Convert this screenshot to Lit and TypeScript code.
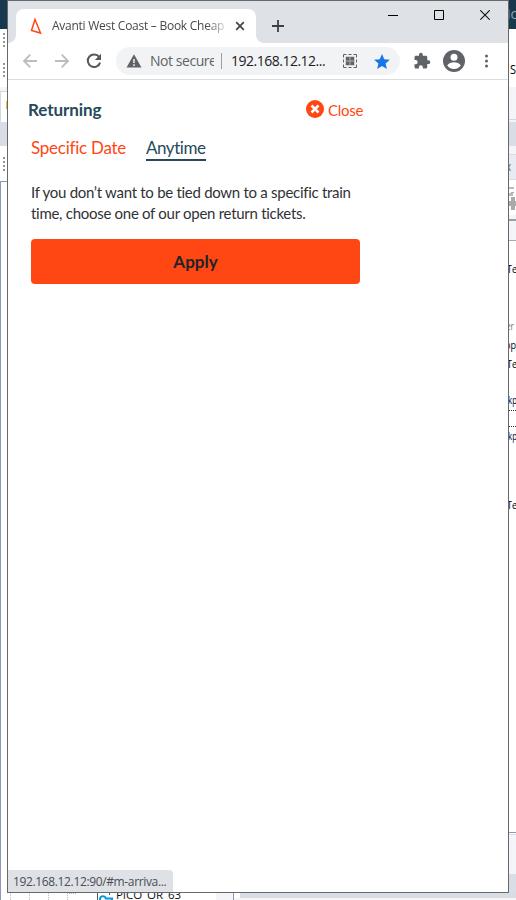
import { LitElement, html, css, svg } from "lit";
import { customElement } from "lit/decorators.js";

@customElement("browser-chrome")
class BrowserChrome extends LitElement {
  static styles = css`
    :host { display: block; font-family: "Open Sans", "Noto Sans", sans-serif; }
    svg { display: block; flex: none; }
    .strip { height: 42px; background: #dee1e6; display: flex; align-items: flex-start; }
    .tab { width: 240px; height: 34px; margin: 8px 0 0 8px; background: #fff; border-radius: 8px 8px 0 0; display: flex; align-items: center; position: relative; }
    .tab::before, .tab::after { content: ""; position: absolute; bottom: 0; width: 8px; height: 8px; }
    .tab::before { left: -8px; background: radial-gradient(circle at 0 0, #dee1e6 7.6px, #fff 8.2px); }
    .tab::after { right: -8px; background: radial-gradient(circle at 100% 0, #dee1e6 7.6px, #fff 8.2px); }
    .fav { margin-left: 14px; }
    .title { margin-left: 10px; width: 172px; font-size: 12px; line-height: 18px; letter-spacing: -0.26px; color: #45484c; white-space: nowrap; overflow: hidden; mask-image: linear-gradient(to right, #000 154px, transparent 178px); }
    .x { margin-left: 11px; }
    .plus { margin: 19px 0 0 16px; }
    .wins { display: flex; margin: 9px 18px 0 auto; gap: 35px; }
    .bar { height: 36px; background: #fff; border-bottom: 1px solid #dadce0; display: flex; align-items: center; }
    .back { margin-left: 14px; }
    .fwd { margin-left: 16px; }
    .reload { margin-left: 16px; }
    .omni { margin-left: 14px; width: 284px; height: 28px; border-radius: 14px; background: #f1f3f4; display: flex; align-items: center; font-size: 14px; line-height: 20px; white-space: nowrap; }
    .warn { margin-left: 10px; }
    .sec { margin-left: 8px; width: 64px; overflow: hidden; color: #5f6368; letter-spacing: -0.45px; }
    .sep { width: 1px; height: 16px; background: #9aa0a6; margin-left: 7px; }
    .url { margin-left: 9px; width: 96px; color: #202124; letter-spacing: -0.5px; }
    .qr { margin-left: 16px; }
    .star { margin-left: 17px; }
    .puzzle { margin-left: 13px; }
    .user { margin-left: 12px; }
    .dots { margin-left: 19px; }
  `;
  render() {
    return html`
      <div class="strip">
        <div class="tab">
          <svg class="fav" width="12" height="18" viewBox="0 0 12 18"><path d="M5 2.5 1.5 13.5 10.5 16Z" fill="none" stroke="#ff4713" stroke-width="1.5"/></svg>
          <div class="title">Avanti West Coast – Book Cheap</div>
          <svg class="x" width="10" height="10" viewBox="0 0 10 10"><path d="M1.2 1.2 8.8 8.8M8.8 1.2 1.2 8.8" stroke="#45494d" stroke-width="1.8"/></svg>
        </div>
        <svg class="plus" width="12" height="12" viewBox="0 0 12 12"><path d="M6 0V12M0 6H12" stroke="#3c4043" stroke-width="1.8"/></svg>
        <div class="wins">
          <svg width="11" height="10"><path d="M0 5.5H10" stroke="#000"/></svg>
          <svg width="11" height="10"><path d="M.5 .5H9.5V9.5H.5Z" fill="none" stroke="#000"/></svg>
          <svg width="10" height="10"><path d="M.3 .3 9.7 9.7M9.7 .3 .3 9.7" stroke="#111" stroke-width="1.1"/></svg>
        </div>
      </div>
      <div class="bar">
        <svg class="back" width="16" height="16" viewBox="0 0 16 16"><path d="M15 8H2.5M8.3 1.7 2 8 8.3 14.3" fill="none" stroke="#babcbe" stroke-width="1.8"/></svg>
        <svg class="fwd" width="16" height="16" viewBox="0 0 16 16"><path d="M1 8H13.5M7.7 1.7 14 8 7.7 14.3" fill="none" stroke="#babcbe" stroke-width="1.8"/></svg>
        <svg class="reload" width="16" height="16" viewBox="0 0 16 16"><path d="M13.2 4A6.3 6.3 0 1 0 14.1 9.6" fill="none" stroke="#55595e" stroke-width="2"/><path d="M15 .8V7H8.8Z" fill="#55595e"/></svg>
        <div class="omni">
          <svg class="warn" width="16" height="14" viewBox="0 0 16 14"><path d="M8 .3 15.5 13.5H.5Z" fill="#5f6368"/><path d="M8 5V9M8 10.3V12" stroke="#f1f3f4" stroke-width="1.5"/></svg>
          <div class="sec">Not secure</div><div class="sep"></div><div class="url">192.168.12.12...</div>
          <svg class="qr" width="14" height="14" viewBox="0 0 14 14"><path d="M.5 3.5V.5H3.5M5.5 .5H8.5M10.5 .5H13.5V3.5M.5 5.5V8.5M13.5 5.5V8.5M.5 10.5V13.5H3.5M5.5 13.5H8.5M10.5 13.5H13.5V10.5" fill="none" stroke="#5f6368"/><path d="M3 3H6.5V6.5H3ZM7.5 3H11V6.5H7.5ZM3 7.5H6.5V11H3ZM7.5 7.5H11V11H7.5Z" fill="#5f6368"/><path d="M2.500 2.500H11.500V11.500H2.500Z" fill="#5f6368" fill-opacity=".45"/></svg>
          <svg class="star" width="16" height="15" viewBox="2 2 20 19"><path d="M12 17.27 18.18 21l-1.64-7.03L22 9.24l-7.19-.61L12 2 9.19 8.63 2 9.24l5.46 4.73L5.82 21z" fill="#1a73e8"/></svg>
        </div>
        <svg class="puzzle" width="18" height="18" viewBox="0 0 24 24"><path d="M20.5 11H19V7c0-1.1-.9-2-2-2h-4V3.5a2.5 2.5 0 0 0-5 0V5H4c-1.1 0-2 .9-2 2v3.8h1.5a2.7 2.7 0 0 1 0 5.4H2V20c0 1.1.9 2 2 2h3.8v-1.5a2.7 2.7 0 0 1 5.4 0V22H17c1.1 0 2-.9 2-2v-4h1.5a2.5 2.5 0 0 0 0-5z" fill="#5f6368"/></svg>
        <svg class="user" width="22" height="22" viewBox="0 0 22 22"><circle cx="11" cy="11" r="11" fill="#5f6368"/><circle cx="11" cy="7.3" r="3.5" fill="#fff"/><path d="M4.2 15.5C5.5 13 8.5 12.2 11 12.2S16.5 13 17.8 15.5C16 18 13.6 19 11 19S6 18 4.2 15.5Z" fill="#fff"/></svg>
        <svg class="dots" width="4" height="14" viewBox="0 0 4 14"><g fill="#5f6368"><circle cx="2.500" cy="2" r="1.500"/><circle cx="2.500" cy="7" r="1.500"/><circle cx="2.500" cy="12" r="1.500"/></g></svg>
      </div>`;
  }
}

@customElement("return-panel")
class ReturnPanel extends LitElement {
  static styles = css`
    :host { display: block; font-family: Lato, sans-serif; font-variant-ligatures: none; padding: 20px 0 0 20px; }
    .head { width: 335px; height: 20px; display: flex; justify-content: space-between; align-items: center; }
    h1 { margin: 0; font-size: 17px; line-height: 20px; color: #26495c; font-weight: 700; letter-spacing: -0.08px; white-space: nowrap; }
    .close { display: flex; align-items: center; gap: 4px; color: #ff4713; font-size: 15px; line-height: 20px; letter-spacing: -0.3px; white-space: nowrap; }
    .close svg { margin-top: -2px; }
    .tabs { display: flex; gap: 20px; margin: 16px 0 0 3px; height: 25px; font-size: 17px; line-height: 23px; white-space: nowrap; }
    .one { color: #ff4713; width: 95px; letter-spacing: -0.25px; }
    .two { color: #26495c; width: 60px; height: 23px; letter-spacing: -0.45px; border-bottom: 2px solid #26495c; }
    p { margin: 21px 0 0 3px; font-size: 15px; line-height: 21px; color: #303236; letter-spacing: -0.285px; white-space: nowrap; }
    .apply { margin: 15px 0 0 3px; width: 329px; height: 45px; border-radius: 4px; background: #ff4713; color: #222329; text-align: center; font-size: 17px; line-height: 45px; font-weight: 700; }
  `;
  render() {
    return html`
      <div class="head">
        <h1>Returning</h1>
        <div class="close"><svg width="18" height="18" viewBox="0 0 18 18"><circle cx="9" cy="9" r="9" fill="#ff4713"/><path d="M5.5 5.5 12.5 12.5M12.5 5.5 5.5 12.5" stroke="#fff" stroke-width="2.5"/></svg><span>Close</span></div>
      </div>
      <div class="tabs"><div class="one">Specific Date</div><div class="two">Anytime</div></div>
      <p>If you don’t want to be tied down to a specific train<br>time, choose one of our open return tickets.</p>
      <div class="apply">Apply</div>`;
  }
}

const peeks = [
  { y: 6, t: "ic", c: "#8fa3b0", s: 14, w: 10 },
  { y: 61, t: "S", c: "#000", s: 12, x: 510, w: 6 },
  { y: 158, t: "x", c: "#555", s: 12, x: 506, w: 5 },
  { y: 260, t: "Te", c: "#000", s: 11, w: 10 },
  { y: 317, t: "er", c: "#777", s: 11, x: 506, w: 8 },
  { y: 336, t: "op", c: "#000", s: 11, x: 505, w: 11 },
  { y: 355, t: "Te", c: "#000", s: 11, w: 10 },
  { y: 391, t: "kp", c: "#00003c", s: 11, x: 508, w: 9 },
  { y: 427, t: "kp", c: "#00003c", s: 11, x: 508, w: 9 },
  { y: 496, t: "Te", c: "#000", s: 11, w: 10 },
];

@customElement("desktop-backdrop")
class DesktopBackdrop extends LitElement {
  static styles = css`
    :host { display: block; }
    svg { display: block; }
    text { font-family: "Open Sans", sans-serif; }
  `;
  render() {
    const r = (x: number, y: number, w: number, h: number, f: string) => svg`<rect x=${x} y=${y} width=${w} height=${h} fill=${f}></rect>`;
    return html`<svg width="516" height="900" viewBox="0 0 516 900" shape-rendering="crispEdges">
      ${r(0, 0, 516, 900, "#fff")}
      ${r(0, 0, 516, 29, "#17384d")}
      ${[33, 37, 41, 45, 63, 67, 71, 75, 157, 161, 165, 169].map((y) => r(3, y, 2, 2, "#969696"))}
      ${r(0, 87, 7, 4, "#f4f5f8")}${r(0, 91, 7, 1, "#d5d8de")}${r(0, 92, 1, 30, "#d5d8de")}
      ${r(6, 101, 1, 8, "#f0b23e")}${r(0, 122, 7, 24, "#d8dde6")}${r(0, 181, 7, 1, "#8b99b5")}${r(0, 181, 1, 719, "#8b99b5")}
      ${r(509, 87, 7, 35, "#f4f5f8")}${r(509, 119, 7, 1, "#d5d8de")}${r(509, 122, 7, 24, "#d8dde6")}
      ${r(509, 146, 7, 8, "#f4f5f8")}${r(509, 154, 7, 25, "#e8ebf2")}${r(509, 154, 7, 1, "#d8dde6")}${r(509, 179, 7, 1, "#d8dde6")}
      ${r(509, 187, 5, 2, "#bbb")}${r(511, 192, 3, 1, "#aaa")}${r(509, 193, 4, 3, "#bbb")}${r(509, 201, 7, 5, "#aaa")}${r(511, 197, 4, 13, "#aaa")}
      ${r(509, 215, 7, 26, "#f4f5f8")}${r(509, 219, 7, 2, "#999fa9")}${r(509, 240, 7, 1, "#aaa")}
      ${[410, 426].map((y) => [509, 511, 513, 515].map((x) => r(x, y, 1, 1, "#333")))}
      ${r(509, 832, 7, 1, "#8b99b5")}${r(509, 834, 7, 1, "#d8dde6")}${r(509, 835, 7, 39, "#f4f5f8")}${r(509, 874, 7, 26, "#d8dde6")}
      ${r(216, 893, 17, 7, "#f4f5f8")}${r(233, 893, 1, 7, "#8b99b5")}${r(240, 893, 276, 5, "#d8dde3")}${r(234, 898, 282, 2, "#f4f5f8")}
      ${r(97, 893, 1, 7, "#555")}${r(109, 893, 1, 2, "#555")}
      ${[10, 29, 48, 67].map((x) => [893, 895, 897, 899].map((y) => r(x, y, 1, 1, "#bbb")))}${[69, 71, 73, 75].map((x) => r(x, 893, 1, 1, "#bbb"))}
      <g shape-rendering="auto"><path d="M100 900V898.500A3 3 0 0 1 105.800 898.500H112V900" fill="none" stroke="#0898de" stroke-width="2"></path></g>
      <text x="116" y="899" font-size="11.500" fill="#111" textLength="65">PICO_OR_63</text>
      ${peeks.map((p) => svg`<text x=${p.x ?? 507} y=${p.y + 13} font-size=${p.s} fill=${p.c} textLength=${p.w} lengthAdjust="spacingAndGlyphs">${p.t}</text>`)}
    </svg>`;
  }
}

@customElement("app-root")
class AppRoot extends LitElement {
  static styles = css`
    :host { display: block; position: relative; width: 516px; height: 900px; overflow: hidden; }
    .window { position: absolute; left: 7px; top: 0; box-sizing: border-box; width: 502px; height: 893px; border: 1px solid #66686b; background: #fff; display: flex; flex-direction: column; }
    .status { margin-top: auto; box-sizing: border-box; width: 165px; height: 22px; padding-left: 5px; background: #dee1e6; border-top-right-radius: 4px; font: 12px/23px "Open Sans", sans-serif; letter-spacing: -0.36px; color: #4b4e52; white-space: nowrap; }
  `;
  render() {
    return html`<desktop-backdrop></desktop-backdrop>
      <div class="window">
        <browser-chrome></browser-chrome>
        <return-panel></return-panel>
        <div class="status">192.168.12.12:90/#m-arriva...</div>
      </div>`;
  }
}
